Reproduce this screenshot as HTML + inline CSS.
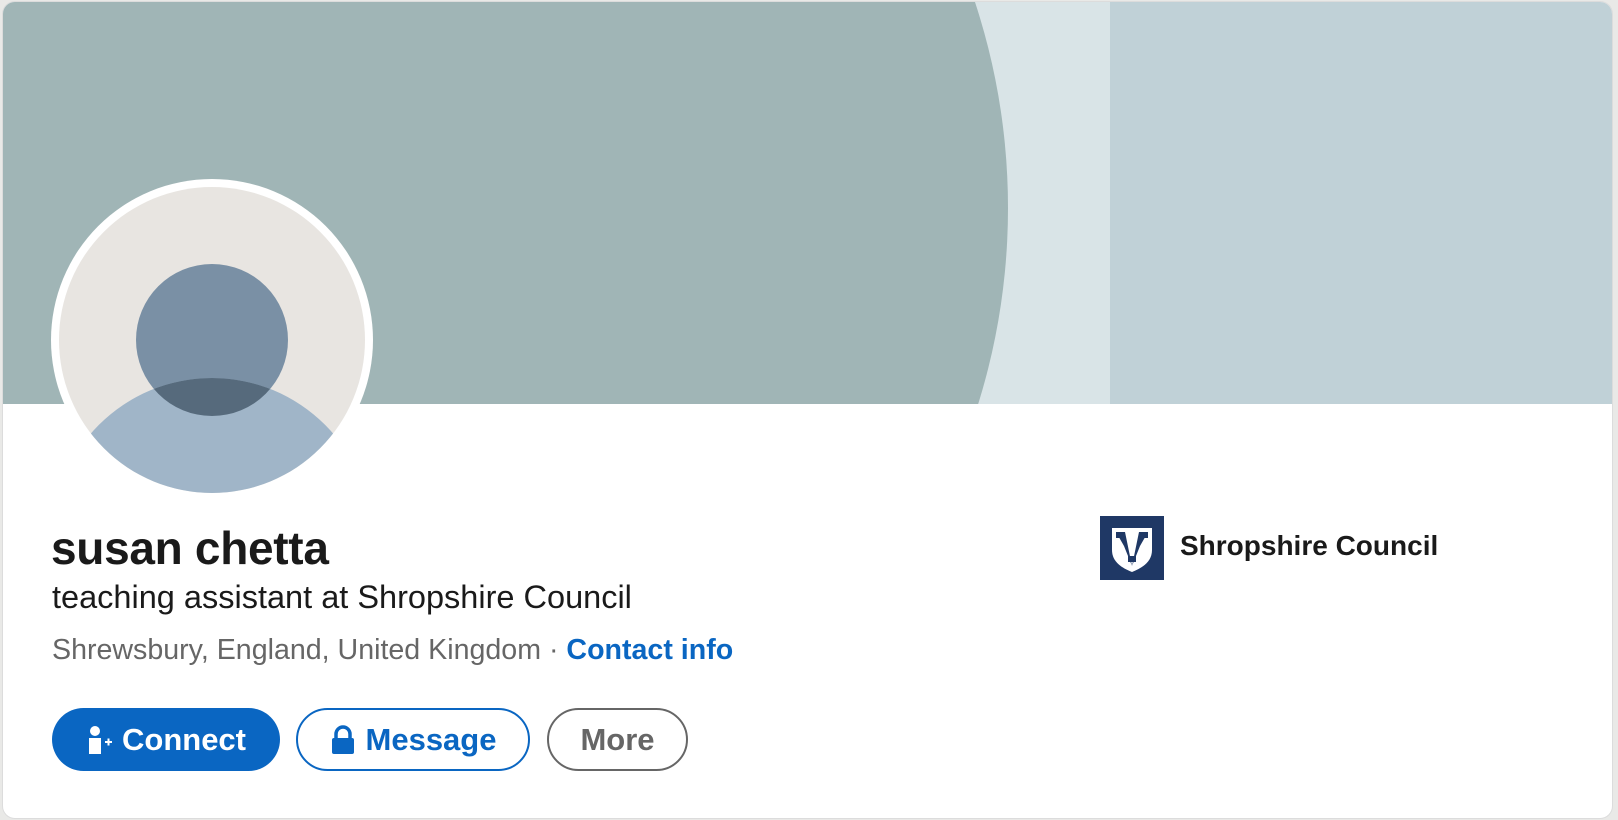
<!DOCTYPE html>
<html><head><style>
html,body{margin:0;padding:0;width:1618px;height:820px;overflow:hidden;}
body{background:#e9e9e7;position:relative;font-family:"Liberation Sans",Arial,sans-serif;}
.card{position:absolute;left:3px;top:2px;width:1609px;height:816px;background:#fff;border-radius:12px;overflow:hidden;box-shadow:0 0 0 1px #dcdcdc;}
.t{position:absolute;white-space:nowrap;}
.btn{position:absolute;top:708px;height:63px;box-sizing:border-box;border-radius:32px;font-weight:bold;font-size:31px;display:flex;align-items:center;justify-content:center;}
</style></head><body>
<div class="card">
<svg width="1609" height="402" style="position:absolute;left:0;top:0">
<rect width="1609" height="402" fill="#c0d1d7"/>
<rect width="1107" height="402" fill="#d9e4e7"/>
<circle cx="346" cy="206" r="659" fill="#a0b5b6"/>
</svg>
</div>
<svg width="340" height="340" style="position:absolute;left:42px;top:170px">
<defs><clipPath id="c"><circle cx="170" cy="170" r="153"/></clipPath><clipPath id="h"><circle cx="170" cy="170" r="76"/></clipPath></defs>
<circle cx="170" cy="170" r="161" fill="#fff"/>
<circle cx="170" cy="170" r="153" fill="#e8e5e1"/>
<g clip-path="url(#c)">
<circle cx="170" cy="170" r="76" fill="#7a90a5"/>
<circle cx="170" cy="368" r="160" fill="#a0b5c8"/>
<circle cx="170" cy="368" r="160" fill="#566a7c" clip-path="url(#h)"/>
</g>
</svg>
<div class="t" style="left:51px;top:521px;font-size:46px;font-weight:bold;color:#1a1a1a;letter-spacing:-0.3px;">susan chetta</div>
<div class="t" style="left:52px;top:579px;font-size:32.5px;color:#1a1a1a;">teaching assistant at Shropshire Council</div>
<div class="t" style="left:52px;top:634px;font-size:28.6px;color:#666;">Shrewsbury, England, United Kingdom · <span style="color:#0a66c2;font-weight:bold">Contact info</span></div>
<div class="btn" style="left:52px;width:228px;background:#0a66c2;color:#fff;">
<svg width="30" height="30" viewBox="0 0 30 30" style="margin-right:6px"><circle cx="9" cy="6" r="5" fill="#fff"/><path d="M3 13h12v16H3z" fill="#fff"/><path d="M19 17h7M22.5 13.5v7" stroke="#fff" stroke-width="2"/></svg>Connect</div>
<div class="btn" style="left:296px;width:234px;border:2px solid #0a66c2;color:#0a66c2;">
<svg width="26" height="30" viewBox="0 0 26 30" style="margin-right:10px"><path d="M6 13V9a7 7 0 0 1 14 0v4" stroke="#0a66c2" stroke-width="3.5" fill="none"/><rect x="2" y="13" width="22" height="16" rx="2" fill="#0a66c2"/></svg>Message</div>
<div class="btn" style="left:547px;width:141px;border:2px solid #666;color:#666;">More</div>
<svg width="64" height="64" viewBox="0 0 64 64" style="position:absolute;left:1100px;top:516px">
<rect width="64" height="64" fill="#1f3865"/>
<path d="M12 12h40v22c0 12-10 18-20 22-10-4-20-10-20-22z" fill="#fff"/>
<path d="M16 16h9l7 34-8-20zM48 16h-9l-7 34 8-20z" fill="#1f3865"/>
<rect x="16" y="16" width="8" height="6" fill="#1f3865"/><rect x="40" y="16" width="8" height="6" fill="#1f3865"/><rect x="28" y="40" width="8" height="6" fill="#1f3865"/>
</svg>
<div class="t" style="left:1180px;top:530px;font-size:28px;font-weight:bold;color:#1a1a1a;">Shropshire Council</div>
</body></html>
